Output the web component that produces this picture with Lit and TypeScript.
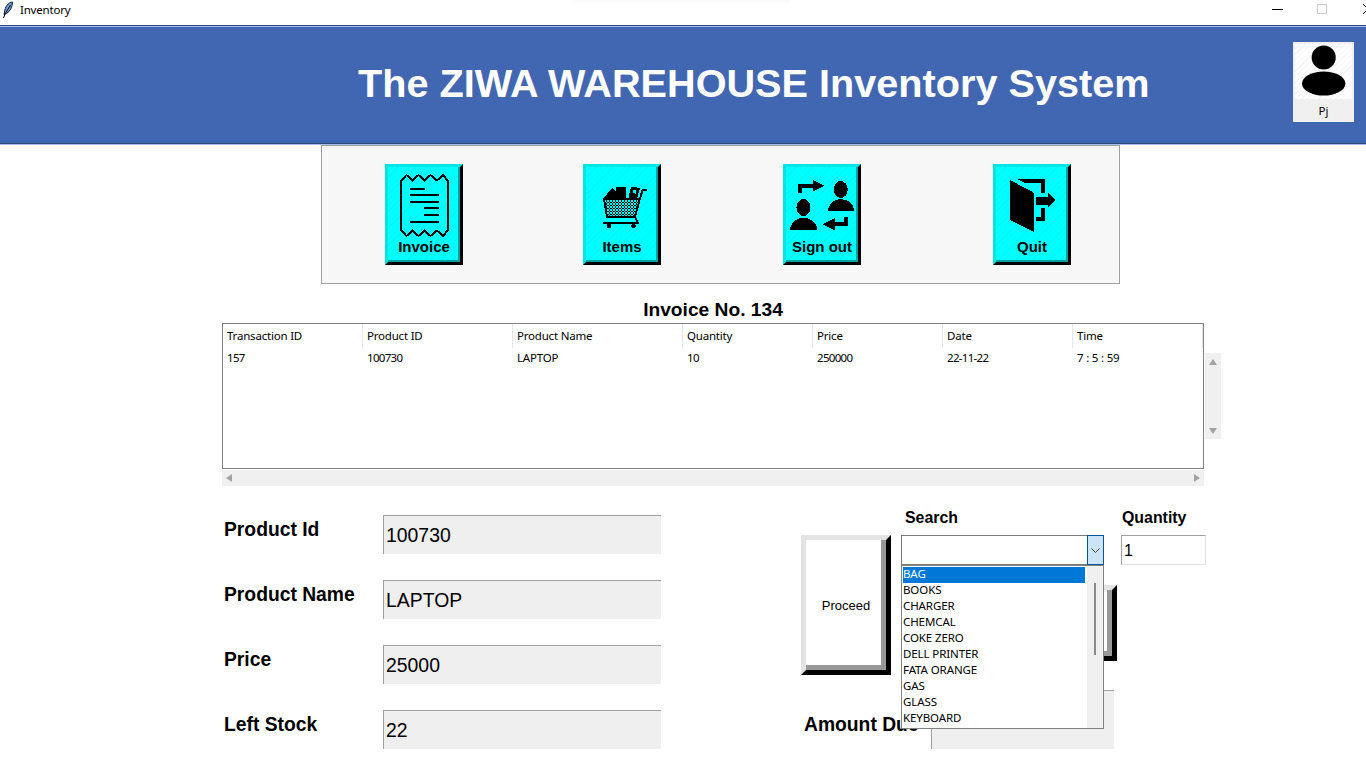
import { LitElement, html, css, svg } from 'lit';
import { customElement } from 'lit/decorators.js';

const COLUMNS = [
  { label: 'Transaction ID', value: '157', width: 140, num: true },
  { label: 'Product ID', value: '100730', width: 150, num: true },
  { label: 'Product Name', value: 'LAPTOP', width: 170, num: false },
  { label: 'Quantity', value: '10', width: 130, num: true },
  { label: 'Price', value: '250000', width: 130, num: true },
  { label: 'Date', value: '22-11-22', width: 130, num: true },
  { label: 'Time', value: '7 : 5 : 59', width: 130, num: false },
];

const FIELDS = [
  { label: 'Product Id', value: '100730' },
  { label: 'Product Name', value: 'LAPTOP' },
  { label: 'Price', value: '25000' },
  { label: 'Left Stock', value: '22' },
];

const SEARCH_ITEMS = [
  'BAG', 'BOOKS', 'CHARGER', 'CHEMCAL', 'COKE ZERO',
  'DELL PRINTER', 'FATA ORANGE', 'GAS', 'GLASS', 'KEYBOARD',
];

const invoiceIcon = svg`
  <path d="M16 17L21.5 11L27.5 16.5L33.5 11L39.5 16.5L45.5 11L52 16.5L58 11L63 17V66L58 72L52 66.5L45.5 72L39.5 66.5L33.5 72L27.5 66.5L21.5 72L16 66Z" fill="none" stroke="#000" stroke-width="2"/>
  <path d="M25 25H40M25 31H54M25 38H54M39 44H54M39 51H54M25 58H54" fill="none" stroke="#000" stroke-width="2"/>`;

const itemsIcon = svg`
  <defs>
    <pattern id="check" width="3" height="3" patternUnits="userSpaceOnUse">
      <rect width="3" height="3" fill="#000"/>
      <rect width="1.5" height="1.5" fill="#0ff"/>
      <rect x="1.5" y="1.5" width="1.5" height="1.5" fill="#0ff"/>
    </pattern>
  </defs>
  <path d="M20 35L29 24L33 28V23H43V35Z" fill="#000"/>
  <path d="M45.5 34L48 22.5L57 24L54 35Z" fill="#000"/>
  <path d="M50 26L53 26.5L52.5 29.5L49.5 29Z" fill="#0ff"/>
  <path d="M21 34.5H57L52 53H24Z" fill="url(#check)" stroke="#000" stroke-width="2"/>
  <path d="M57 34.5L59.7 25.5H64M52 53L55 59.2H20" fill="none" stroke="#000" stroke-width="2"/>
  <circle cx="26" cy="62" r="2.2" fill="#000"/>
  <circle cx="50.5" cy="62" r="2.2" fill="#000"/>`;

const signOutIcon = svg`
  <path d="M17 29V22H30" fill="none" stroke="#000" stroke-width="4"/>
  <path d="M29.5 16L41.5 21.8L29.5 28Z" fill="#000"/>
  <ellipse cx="57.7" cy="25.5" rx="7" ry="8.5" fill="#000"/>
  <path d="M45 47Q46 36 58 35Q70 36 71.5 47Z" fill="#000"/>
  <ellipse cx="20.5" cy="43.5" rx="7" ry="8.5" fill="#000"/>
  <path d="M7 66Q8 55 20.5 53.5Q33 55 34.5 66Z" fill="#000"/>
  <path d="M39.5 60.3L51.5 54.3V66Z" fill="#000"/>
  <path d="M51 60.3H62.5V53" fill="none" stroke="#000" stroke-width="4"/>`;

const quitIcon = svg`
  <path d="M17 16L40.5 28.5V68L17 56Z" fill="#000"/>
  <path d="M24 15H51.5V28.5H48V18.5H31Z" fill="#000"/>
  <path d="M48 44H51.5V56.5H43V53H48Z" fill="#000"/>
  <path d="M43 32.5H54.5V28.5L62 36L54.5 43.5V40.5H43Z" fill="#000"/>`;

const TOOLS = [
  { label: 'Invoice', icon: invoiceIcon },
  { label: 'Items', icon: itemsIcon },
  { label: 'Sign out', icon: signOutIcon },
  { label: 'Quit', icon: quitIcon },
];

@customElement('app-root')
export class AppRoot extends LitElement {
  static styles = css`
    :host {
      display: block;
      width: 1366px;
      height: 768px;
      overflow: hidden;
      background: #fff;
      font-family: "Liberation Sans", Arial, sans-serif;
      color: #000;
    }

    .titlebar {
      display: flex;
      align-items: center;
      height: 25px;
      background: #fff;
      position: relative;
      font-family: "Noto Sans", sans-serif;
      font-size: 11.5px;
      letter-spacing: -0.2px;
    }

    .titlebar span {
      position: relative;
      top: -3px;
    }

    .ghost {
      position: absolute;
      left: 575px;
      top: 0;
      width: 215px;
      height: 2px;
      background: #fafafa;
      box-shadow: 0 0 3px #f8f8f8;
    }

    .feather {
      width: 12px;
      height: 18px;
      margin: -6px 6px 0 2px;
    }

    .win-min {
      position: absolute;
      left: 1272px;
      top: 9px;
      width: 11px;
      height: 1px;
      background: #000;
    }

    .win-max {
      position: absolute;
      left: 1317px;
      top: 4px;
      width: 8px;
      height: 8px;
      border: 1px solid #ccc;
    }

    .win-close {
      position: absolute;
      left: 1363px;
      top: 4px;
      width: 10px;
      height: 10px;
    }

    .header {
      display: flex;
      justify-content: space-between;
      align-items: flex-start;
      height: 117px;
      background: #4267b2;
      border-top: 1px solid #2f4a80;
      border-bottom: 1px solid #2f4a80;
      box-shadow: inset 0 1px 0 #a9bdea, 0 1px 0 #a9bdea;
      padding-left: 358px;
      padding-right: 12px;
    }

    .header h1 {
      margin: 34px 0 0;
      font-size: 39.65px;
      line-height: 46px;
      font-weight: bold;
      color: #fff;
      white-space: nowrap;
    }

    .avatar {
      width: 61px;
      height: 80px;
      margin-top: 16px;
      background: #f0f0f0;
      display: flex;
      flex-direction: column;
      align-items: center;
    }

    .avatar svg {
      width: 57px;
      height: 57px;
      margin-top: 2px;
      background: repeating-linear-gradient(135deg, #fff 0 3px, #f5f5f5 3px 4px);
    }

    .avatar span {
      font-family: "Noto Sans", sans-serif;
      font-size: 11.5px;
      line-height: 23px;
    }

    .toolbar {
      display: grid;
      grid-template-columns: 198px 200px 210px 78px;
      box-sizing: border-box;
      width: 799px;
      height: 139px;
      margin: 1px 0 0 321px;
      padding: 18px 0 0 63px;
      background: #f7f7f7;
      border: 1px solid #a0a0a0;
    }

    .tool {
      box-sizing: border-box;
      width: 78px;
      height: 101px;
      border: 3px solid;
      border-color: #00e5e5 #000 #000 #00e5e5;
    }

    .tool-inner {
      box-sizing: border-box;
      height: 100%;
      border: solid #00a0a0;
      border-width: 0 2px 2px 0;
      background: repeating-linear-gradient(135deg, #0ff 0 3px, #00f6f6 3px 4px);
      display: flex;
      flex-direction: column;
      align-items: center;
    }

    .tool svg {
      width: 70px;
      height: 70px;
      flex: none;
    }

    .tool span {
      font-size: 15px;
      font-weight: bold;
      line-height: 20px;
      margin-left: 2px;
      white-space: nowrap;
    }

    .invoice {
      width: 982px;
      margin-left: 222px;
    }

    .invoice-no {
      margin: 15px 0 0;
      height: 24px;
      text-align: center;
      font-size: 19.2px;
      line-height: 22px;
      font-weight: bold;
    }

    .table-wrap {
      display: flex;
      width: 999px;
    }

    .table {
      box-sizing: border-box;
      flex: none;
      width: 982px;
      height: 146px;
      border: 1px solid #828282;
      font-family: "Noto Sans", sans-serif;
      font-size: 11.5px;
      letter-spacing: -0.2px;
    }

    .row {
      display: flex;
    }

    .cell {
      box-sizing: border-box;
      padding-left: 4px;
      white-space: nowrap;
    }

    .row.head .cell {
      height: 24px;
      line-height: 23px;
      border-right: 1px solid #e5e5e5;
    }

    .row.body .cell {
      height: 20px;
      line-height: 19px;
    }

    .row.body .cell.num {
      letter-spacing: -0.7px;
    }

    .vscroll {
      flex: none;
      display: flex;
      flex-direction: column;
      justify-content: space-between;
      align-items: center;
      box-sizing: border-box;
      width: 16px;
      height: 86px;
      margin: 30px 0 0 1px;
      padding: 6px 0 5px;
      background: #f0f0f0;
    }

    .hscroll {
      display: flex;
      justify-content: space-between;
      align-items: center;
      box-sizing: border-box;
      height: 16px;
      margin-top: 1px;
      padding: 0 4px;
      background: #f0f0f0;
    }

    .arrow {
      width: 0;
      height: 0;
      border: 4px solid transparent;
    }

    .arrow.up { border-top: 0; border-bottom: 6px solid #a3a3a3; }
    .arrow.down { border-bottom: 0; border-top: 6px solid #a3a3a3; }
    .arrow.left { border-left: 0; border-right: 6px solid #a3a3a3; }
    .arrow.right { border-right: 0; border-left: 6px solid #a3a3a3; }

    .lower {
      display: flex;
      margin-top: 29px;
      padding-left: 224px;
    }

    .fields {
      display: flex;
      flex-direction: column;
      gap: 26px;
      width: 577px;
    }

    .field {
      display: flex;
      height: 39px;
    }

    .field label {
      width: 159px;
      font-size: 19.3px;
      font-weight: bold;
      line-height: 30px;
    }

    .value {
      box-sizing: border-box;
      width: 278px;
      height: 39px;
      padding-left: 2px;
      background: #efefef;
      border-top: 1px solid #a0a0a0;
      border-left: 1px solid #a0a0a0;
      font-size: 19.4px;
      line-height: 38px;
    }

    .side {
      position: relative;
      display: grid;
      grid-template-columns: 90px 203px 84px;
      grid-template-rows: 27px 140px 15px 59px;
      column-gap: 10px;
      margin-top: -7px;
      width: 405px;
    }

    .caption {
      font-size: 15.9px;
      font-weight: bold;
      line-height: 20px;
      padding-left: 4px;
    }

    .caption.qty {
      margin-left: 8px;
      padding-left: 0;
    }

    .bevel {
      box-sizing: border-box;
      border: 5px solid;
      border-color: #e3e3e3 #000 #000 #e3e3e3;
    }

    .bevel-inner {
      box-sizing: border-box;
      height: 100%;
      border: solid #999;
      border-width: 0 5px 5px 0;
      padding: 5px 0 0 5px;
      background: #fff;
      display: flex;
      align-items: center;
      justify-content: center;
      font-size: 13px;
    }

    .proceed {
      grid-column: 1;
      grid-row: 2;
    }

    .slot {
      grid-column: 2;
      grid-row: 2;
      position: relative;
      z-index: 1;
    }

    .behind {
      position: absolute;
      left: 100px;
      top: 50px;
      width: 116px;
      height: 76px;
    }

    .combo {
      position: relative;
      box-sizing: border-box;
      height: 30px;
      border: 1px solid #7a7a7a;
      background: #fff;
    }

    .combo-btn {
      position: absolute;
      top: -1px;
      right: -1px;
      bottom: -1px;
      box-sizing: border-box;
      width: 17px;
      display: flex;
      align-items: center;
      justify-content: center;
      background: #cce4f7;
      border: 1px solid #005499;
    }

    .combo-btn svg {
      width: 9px;
      height: 5px;
    }

    .dropdown {
      position: absolute;
      left: 0;
      top: 30px;
      right: 0;
      box-sizing: border-box;
      height: 164px;
      padding: 1px 0 0 1px;
      border: 1px solid #828282;
      background: #fff;
      font-family: "Noto Sans", sans-serif;
      font-size: 11.5px;
      letter-spacing: -0.1px;
    }

    .dropdown div.item {
      box-sizing: border-box;
      width: 182px;
      height: 16px;
      line-height: 14px;
      white-space: nowrap;
    }

    .dropdown div.item.active {
      background: #0078d7;
      color: #fff;
    }

    .dropdown-bar {
      position: absolute;
      top: 0;
      right: 0;
      bottom: 0;
      width: 16px;
      background: #f0f0f0;
    }

    .dropdown-thumb {
      position: absolute;
      top: 17px;
      left: 7px;
      width: 2px;
      height: 72px;
      background: #8a8a8a;
    }

    .qty-entry {
      box-sizing: border-box;
      grid-column: 3;
      grid-row: 2;
      margin-left: 7px;
      width: 85px;
      height: 30px;
      padding-left: 2px;
      border: 1px solid;
      border-color: #a0a0a0 #e3e3e3 #e3e3e3 #a0a0a0;
      font-size: 16px;
      line-height: 29px;
    }

    .amount {
      grid-column: 1 / 4;
      grid-row: 4;
      display: flex;
    }

    .amount label {
      width: 130px;
      padding-left: 3px;
      box-sizing: border-box;
      font-size: 19.3px;
      font-weight: bold;
      line-height: 70px;
      white-space: nowrap;
    }

    .amount-value {
      box-sizing: border-box;
      width: 183px;
      height: 59px;
      background: #efefef;
      border-top: 1px solid #a0a0a0;
      border-left: 1px solid #a0a0a0;
    }
  `;

  render() {
    return html`
      <div class="titlebar">
        <div class="ghost"></div>
        <svg class="feather" viewBox="0 0 12 18">
          <path d="M10.5 1C6 1.5 3 6 2.5 11L2 13.5L4.5 12.5C8 10.5 10.5 6 10.5 1Z" fill="#6f9fd8" stroke="#10203a" stroke-width="1"/>
          <path d="M8.5 4L3 13L1.5 17" fill="none" stroke="#000" stroke-width="1"/>
        </svg>
        <span>Inventory</span>
        <div class="win-min"></div>
        <div class="win-max"></div>
        <svg class="win-close" viewBox="0 0 10 10">
          <path d="M0 0L10 10M10 0L0 10" stroke="#000" stroke-width="1"/>
        </svg>
      </div>

      <div class="header">
        <h1>The ZIWA WAREHOUSE Inventory System</h1>
        <div class="avatar">
          <svg viewBox="0 0 57 57">
            <circle cx="28.7" cy="14" r="12.5" fill="#000"/>
            <ellipse cx="28.7" cy="41" rx="22.5" ry="12.5" fill="#000"/>
          </svg>
          <span>Pj</span>
        </div>
      </div>

      <div class="toolbar">
        ${TOOLS.map(t => html`
          <div class="tool">
            <div class="tool-inner">
              <svg viewBox="3 3 70 70" shape-rendering="crispEdges">${t.icon}</svg>
              <span>${t.label}</span>
            </div>
          </div>
        `)}
      </div>

      <div class="invoice">
        <div class="invoice-no">Invoice No. 134</div>
        <div class="table-wrap">
          <div class="table">
            <div class="row head">
              ${COLUMNS.map(c => html`<div class="cell" style="width:${c.width}px">${c.label}</div>`)}
            </div>
            <div class="row body">
              ${COLUMNS.map(c => html`<div class="cell ${c.num ? 'num' : ''}" style="width:${c.width}px">${c.value}</div>`)}
            </div>
          </div>
          <div class="vscroll">
            <div class="arrow up"></div>
            <div class="arrow down"></div>
          </div>
        </div>
        <div class="hscroll">
          <div class="arrow left"></div>
          <div class="arrow right"></div>
        </div>
      </div>

      <div class="lower">
        <div class="fields">
          ${FIELDS.map(f => html`
            <div class="field">
              <label>${f.label}</label>
              <div class="value">${f.value}</div>
            </div>
          `)}
        </div>
        <div class="side">
          <div></div>
          <div class="caption">Search</div>
          <div class="caption qty">Quantity</div>

          <div class="bevel proceed">
            <div class="bevel-inner">Proceed</div>
          </div>

          <div class="slot">
            <div class="bevel behind"><div class="bevel-inner"></div></div>
            <div class="combo">
              <div class="combo-btn">
                <svg viewBox="0 0 9 5"><path d="M0.5 0.5L4.5 4.5L8.5 0.5" fill="none" stroke="#444" stroke-width="1"/></svg>
              </div>
            </div>
            <div class="dropdown">
              ${SEARCH_ITEMS.map((item, i) => html`<div class="item ${i === 0 ? 'active' : ''}">${item}</div>`)}
              <div class="dropdown-bar"><div class="dropdown-thumb"></div></div>
            </div>
          </div>

          <div class="qty-entry">1</div>

          <div class="amount">
            <label>Amount Due</label>
            <div class="amount-value"></div>
          </div>
        </div>
      </div>
    `;
  }
}
